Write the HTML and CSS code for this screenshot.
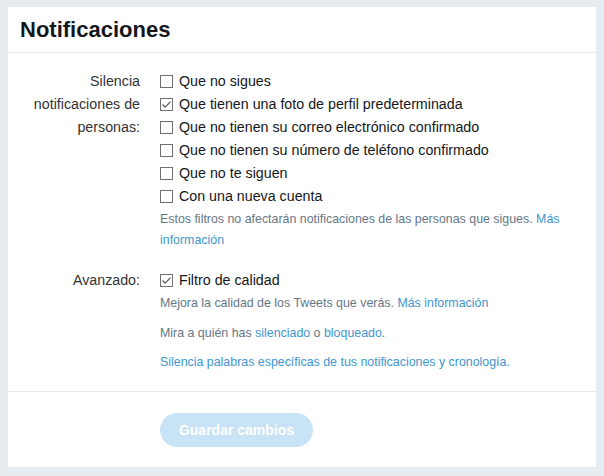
FILE: index.html
```html
<!DOCTYPE html>
<html lang="es">
<head>
<meta charset="utf-8">
<title>Notificaciones</title>
<link rel="stylesheet" href="styles.css">
</head>
<body>
<div class="card">
  <div class="header"><h1 class="title">Notificaciones</h1></div>
  <div class="content">
    <div class="row">
      <div class="label">Silencia notificaciones de personas:</div>
      <div class="controls">
        <label class="check"><span class="box"></span>Que no sigues</label>
        <label class="check"><span class="box"><svg viewBox="0 0 13 13" width="13" height="13"><path d="M2.5 6.5 L5.2 9.2 L10.5 3.6" fill="none" stroke="#555" stroke-width="1.2"/></svg></span>Que tienen una foto de perfil predeterminada</label>
        <label class="check"><span class="box"></span>Que no tienen su correo electrónico confirmado</label>
        <label class="check"><span class="box"></span>Que no tienen su número de teléfono confirmado</label>
        <label class="check"><span class="box"></span>Que no te siguen</label>
        <label class="check"><span class="box"></span>Con una nueva cuenta</label>
        <p class="help">Estos filtros no afectarán notificaciones de las personas que sigues. <a class="link" href="#">Más información</a></p>
      </div>
    </div>
    <div class="row row-adv">
      <div class="label">Avanzado:</div>
      <div class="controls">
        <label class="check"><span class="box"><svg viewBox="0 0 13 13" width="13" height="13"><path d="M2.5 6.5 L5.2 9.2 L10.5 3.6" fill="none" stroke="#555" stroke-width="1.2"/></svg></span>Filtro de calidad</label>
        <p class="help">Mejora la calidad de los Tweets que verás. <a class="link" href="#">Más información</a></p>
        <p class="help help-gap">Mira a quién has <a class="link" href="#">silenciado</a> o <a class="link" href="#">bloqueado</a>.</p>
        <p class="help help-gap2"><a class="link" href="#">Silencia palabras específicas de tus notificaciones y cronología.</a></p>
      </div>
    </div>
  </div>
  <div class="footer">
    <button class="save" type="button">Guardar cambios</button>
  </div>
</div>
</body>
</html>
```
FILE: styles.css
```css
html, body {
  margin: 0;
  padding: 0;
}
body {
  background: #e6ecf0;
  font-family: "Liberation Sans", Arial, sans-serif;
  color: #14171a;
  padding: 7px 8px 0 8px;
  height: 476px;
  box-sizing: border-box;
}
.card {
  background: #fff;
  height: 460px;
  display: flex;
  flex-direction: column;
}
.header {
  height: 46px;
  box-sizing: border-box;
  border-bottom: 1px solid #e6ecf0;
  padding: 0 12px;
  display: flex;
  align-items: center;
}
.title {
  margin: 0;
  font-size: 22px;
  font-weight: bold;
  color: #14171a;
  line-height: 26px;
  padding-top: 1px;
}
.content {
  padding: 17px 0 0 0;
  height: 339px;
  box-sizing: border-box;
  border-bottom: 1px solid #e6ecf0;
}
.row {
  display: flex;
  gap: 20px;
}
.row-adv {
  margin-top: 18px;
}
.label {
  width: 132px;
  flex: none;
  text-align: right;
  font-size: 14.25px;
  line-height: 23px;
  color: #333;
}
.controls {
  flex: 1;
}
.check {
  display: flex;
  align-items: center;
  gap: 6px;
  font-size: 14.25px;
  line-height: 23px;
  color: #14171a;
}
.box {
  width: 13px;
  height: 13px;
  box-sizing: border-box;
  border: 1px solid #707070;
  flex: none;
  position: relative;
}
.box svg {
  position: absolute;
  left: -1px;
  top: -1px;
}
.help {
  margin: 1px 0 0 0;
  font-size: 12.4px;
  line-height: 21px;
  color: #657786;
}
.help-gap {
  margin-top: 9px;
}
.help-gap2 {
  margin-top: 8px;
}
.link {
  color: #4096d0;
  text-decoration: none;
}
.footer {
  padding: 21px 0 0 152px;
}
.save {
  width: 153px;
  height: 34px;
  border: none;
  border-radius: 17px;
  background: #c8e2f6;
  color: #fff;
  font-family: "Liberation Sans", Arial, sans-serif;
  font-size: 14px;
  font-weight: bold;
  padding: 0;
}
```
